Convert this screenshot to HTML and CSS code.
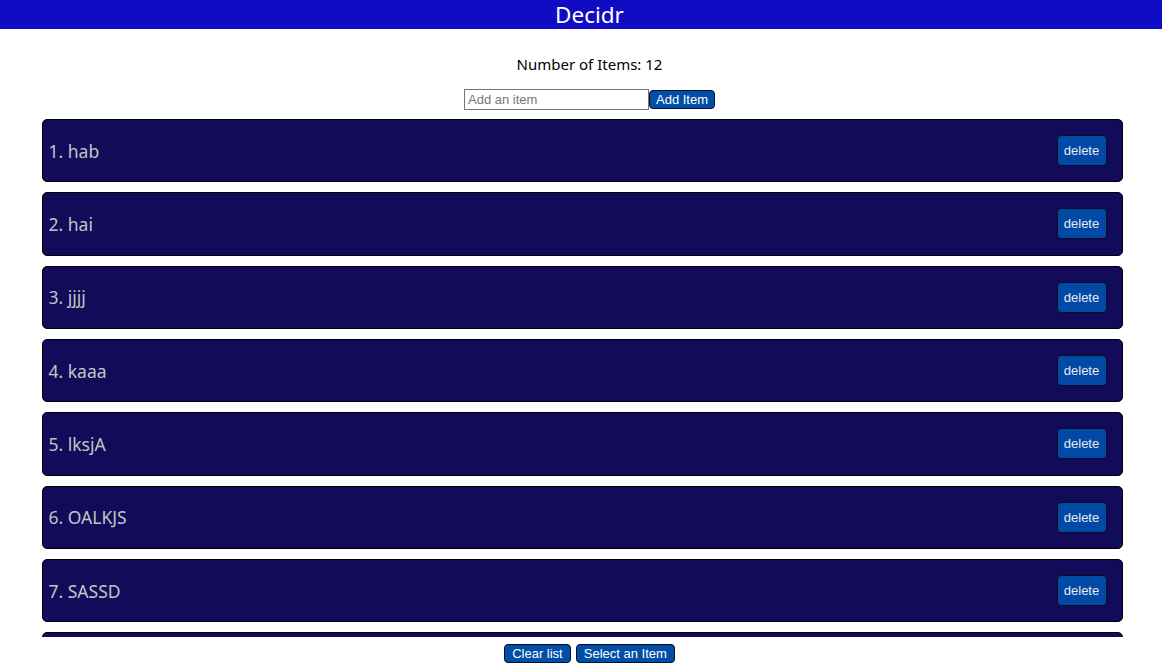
FILE: index.html
```html
<!DOCTYPE html>
<html>
<head>
<meta charset="utf-8">
<title>Decidr</title>
<link rel="stylesheet" href="styles.css">
</head>
<body>
<header class="topbar">Decidr</header>
<main class="app">
  <p class="count">Number of Items: 12</p>
  <form class="add-row">
    <input class="add-input" type="text" placeholder="Add an item"><button class="btn" type="button">Add Item</button>
  </form>
  <div class="list">
    <div class="card"><span class="card-text">1. hab</span><button class="btn btn-delete" type="button">delete</button></div>
    <div class="card"><span class="card-text">2. hai</span><button class="btn btn-delete" type="button">delete</button></div>
    <div class="card"><span class="card-text">3. jjjj</span><button class="btn btn-delete" type="button">delete</button></div>
    <div class="card"><span class="card-text">4. kaaa</span><button class="btn btn-delete" type="button">delete</button></div>
    <div class="card"><span class="card-text">5. lksjA</span><button class="btn btn-delete" type="button">delete</button></div>
    <div class="card"><span class="card-text">6. OALKJS</span><button class="btn btn-delete" type="button">delete</button></div>
    <div class="card"><span class="card-text">7. SASSD</span><button class="btn btn-delete" type="button">delete</button></div>
    <div class="card"><span class="card-text">8. TTTT</span><button class="btn btn-delete" type="button">delete</button></div>
  </div>
  <div class="actions">
    <button class="btn btn-action" type="button">Clear list</button>
    <button class="btn btn-action" type="button">Select an Item</button>
  </div>
</main>
</body>
</html>
```
FILE: styles.css
```css
html, body {
  margin: 0;
  padding: 0;
  background: #ffffff;
}
body {
  font-family: "Noto Sans", "DejaVu Sans", sans-serif;
}
.topbar {
  background: #100cc4;
  color: #ffffff;
  height: 29px;
  line-height: 29px;
  font-size: 22.5px;
  text-align: center;
  padding-left: 17px;
}
.app {
  display: flex;
  flex-direction: column;
  align-items: center;
}
.count {
  margin: 26px 0 0 17px;
  font-size: 15px;
  line-height: 18px;
  color: #000;
}
.add-row {
  margin: 16px 0 0 17px;
  display: flex;
  align-items: center;
}
.add-input {
  box-sizing: border-box;
  width: 185px;
  height: 21px;
  border: 1px solid #767676;
  border-radius: 0;
  padding: 1px 3px;
  font-family: "Liberation Sans", Arial, sans-serif;
  font-size: 13px;
  margin: 0;
}
.add-input::placeholder {
  color: #777;
}
.btn {
  box-sizing: border-box;
  background: #004ea6;
  color: #ffffff;
  border: 1px solid #0a0a2a;
  border-radius: 4px;
  font-family: "Liberation Sans", Arial, sans-serif;
  font-size: 13px;
  height: 19px;
  padding: 0 6px;
  margin: 0;
  line-height: 17px;
}
.btn-action {
  padding: 0 7px;
}
.list {
  margin: 8px 0 0 2px;
  width: 1081px;
  height: 519px;
  overflow: hidden;
  display: flex;
  flex-direction: column;
  gap: 10px;
  padding-top: 1px;
  box-sizing: border-box;
}
.card {
  flex: 0 0 auto;
  box-sizing: border-box;
  height: 63.33px;
  background: #110b5a;
  border: 1px solid #000000;
  border-radius: 5px;
  display: flex;
  align-items: center;
  justify-content: space-between;
  padding: 0 15px 0 6px;
}
.card-text {
  color: #c4c4c4;
  font-size: 17.5px;
}
.btn-delete {
  height: 31px;
  width: 50px;
  padding: 0;
  background: #004aa5;
  border-color: #0a0a20;
  color: #e8e8f0;
  font-size: 13px;
}
.actions {
  margin: 7px 0 0 17px;
  display: flex;
  gap: 5px;
}
```
